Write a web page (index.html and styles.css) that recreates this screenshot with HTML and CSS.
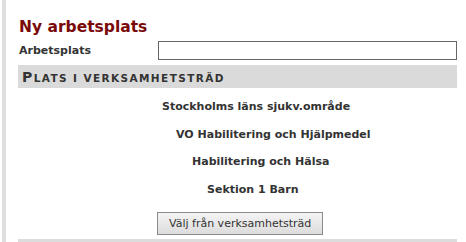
FILE: index.html
```html
<!DOCTYPE html>
<html lang="sv">
<head>
<meta charset="utf-8">
<link rel="stylesheet" href="styles.css">
</head>
<body>
<div class="page">
  <h1 class="title">Ny arbetsplats</h1>
  <div class="field">
    <label class="label">Arbetsplats</label>
    <input class="input" type="text">
  </div>
  <div class="section"><span class="cap">P</span>lats i verksamhetsträd</div>
  <ul class="tree">
    <li class="node l0">Stockholms läns sjukv.område</li>
    <li class="node l1">VO Habilitering och Hjälpmedel</li>
    <li class="node l2">Habilitering och Hälsa</li>
    <li class="node l3">Sektion 1 Barn</li>
  </ul>
  <div class="actions">
    <button class="btn" type="button">Välj från verksamhetsträd</button>
  </div>
  <div class="footer-bar"></div>
</div>
</body>
</html>
```
FILE: styles.css
```css
html, body {
  margin: 0;
  padding: 0;
  background: #fff;
}
body {
  font-family: "DejaVu Sans", Verdana, sans-serif;
  color: #333;
  font-size: 11px;
}
.page {
  margin-left: 2px;
  border-left: 4px solid #dedede;
  padding: 17px 9px 0 12px;
  height: 242px;
  box-sizing: border-box;
  display: flex;
  flex-direction: column;
}
.title {
  margin: 0 0 0 1px;
  font-size: 15.5px;
  line-height: 20px;
  font-weight: bold;
  color: #7a0a0a;
}
.field {
  display: flex;
  align-items: center;
  margin-top: 4px;
  height: 19px;
}
.label {
  font-weight: bold;
  width: 139px;
  padding-left: 1px;
  font-size: 11px;
}
.input {
  flex: 1;
  height: 19px;
  box-sizing: border-box;
  border: 1px solid #666;
  margin: 0;
  padding: 0 2px;
}
.section {
  margin-top: 5px;
  background: #dadada;
  height: 23px;
  line-height: 24px;
  padding-left: 4px;
  font-weight: bold;
  text-transform: uppercase;
  font-size: 10.5px;
  letter-spacing: 1.4px;
  color: #333;
}
.cap {
  font-size: 14px;
}
.tree {
  list-style: none;
  margin: 0;
  padding: 0;
  padding-top: 10px;
}
.node {
  font-weight: bold;
  height: 27.5px;
  line-height: 18px;
}
.l0 { padding-left: 144px; }
.l1 { padding-left: 158px; }
.l2 { padding-left: 174px; }
.l3 { padding-left: 189px; }
.actions {
  padding-left: 139px;
  margin-top: 4px;
}
.btn {
  font-family: "DejaVu Sans", Verdana, sans-serif;
  font-size: 11px;
  color: #333;
  height: 23px;
  padding: 0 11px;
  border: 1px solid #8a8a8a;
  background: linear-gradient(#f4f4f4, #dcdcdc);
  border-radius: 0;
}
.footer-bar {
  margin-top: 4px;
  height: 6px;
  background: #dcdcdc;
}
```
